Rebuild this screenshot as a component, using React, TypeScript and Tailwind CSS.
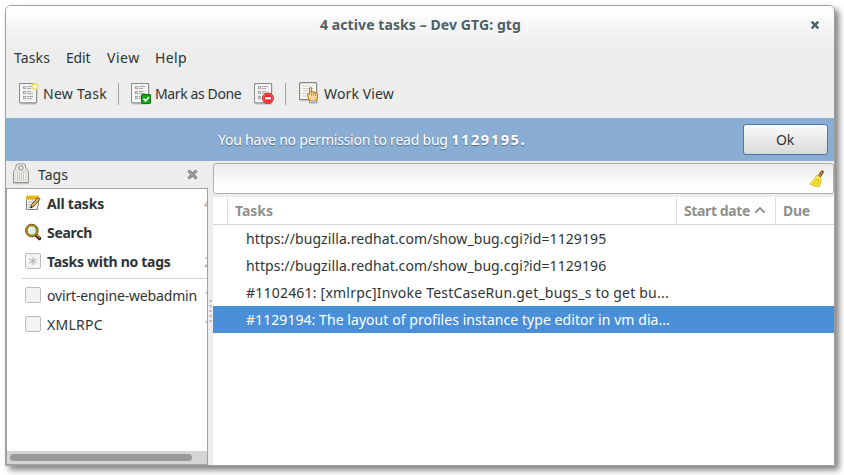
import type { ReactNode } from 'react';

function ListPage({ children }: { children?: ReactNode }) {
  return (
    <svg viewBox="0 0 21 22" className="h-[22px] w-[21px] shrink-0 overflow-visible">
      <path d="M2 21h15.5" stroke="#bcbcbc" strokeWidth="1" />
      <rect x="0.6" y="0.6" width="17" height="19.2" rx="0.8" fill="#f0f0f0" stroke="#8b8b87" strokeWidth="1.2" />
      <rect x="1.9" y="1.9" width="14.4" height="16.6" fill="none" stroke="#ffffff" strokeWidth="1" />
      <g fill="none" stroke="#a9a9a9" strokeWidth="1">
        <rect x="4.5" y="3.5" width="2" height="2" />
        <rect x="4.5" y="8.5" width="2" height="2" />
        <rect x="4.5" y="13.5" width="2" height="2" />
        <path d="M8 3.5h6M8 5.5h4M8 8.5h4M8 10.5h6M8 13.5h6M8 15.5h5" />
      </g>
      {children}
    </svg>
  );
}

function NewTaskIcon() {
  return (
    <ListPage>
      <circle cx="16" cy="3.5" r="2.6" fill="#fffde8" stroke="#f3e06c" strokeWidth="1.6" />
    </ListPage>
  );
}

function DoneIcon() {
  return (
    <ListPage>
      <rect x="10.5" y="11.5" width="9" height="9" rx="0.6" fill="#0ba80d" stroke="#037b05" />
      <path d="M12.5 15.6l2 2.4 3.6-4" fill="none" stroke="#fff" strokeWidth="1.6" />
    </ListPage>
  );
}

function DismissIcon() {
  return (
    <ListPage>
      <circle cx="14" cy="15.3" r="5.4" fill="#ee2b2b" stroke="#cf1f1f" strokeWidth="1" />
      <circle cx="14" cy="15.3" r="4.6" fill="none" stroke="#f47b7b" strokeWidth="0.7" />
      <rect x="11" y="14.2" width="6" height="2.2" fill="#fff" />
    </ListPage>
  );
}

function WorkViewIcon() {
  return (
    <svg viewBox="0 0 20 22" className="relative -top-px h-[22px] w-[20px] shrink-0 overflow-visible">
      <path d="M1 19h9" stroke="#cfcfcf" strokeWidth="1" />
      <rect x="0.6" y="0.6" width="17" height="17" rx="1" fill="#fbfbf9" stroke="#858580" strokeWidth="1.2" />
      <path d="M3 4h12M3 6.5h12M3 9h9M3 11.5h6M3 14h6" stroke="#c9cdc2" strokeWidth="1" />
      <path d="M10.500 19v1.800h7.500V19" fill="#fff" stroke="#5d93d2" strokeWidth="1" />
      <path
        d="M10.5 12V6.8q0-1.3 1-1.3t1.1 1.3V10l1-.4 1 .7 1-.3 1 .8q1.8-.1 1.8 1.4v3.1q0 3-2.2 3.7h-4.4q-1.5-.5-2-2l-1.2-3.6q-.3-1.6.9-1.7z"
        fill="#f6d7a4"
        stroke="#c17d11"
        strokeWidth="1.1"
      />
      <path d="M12.6 10v4M14.6 10.4v3.4M16.5 11v3" stroke="#c17d11" strokeWidth="0.7" />
    </svg>
  );
}

function TagIcon() {
  return (
    <svg viewBox="0 0 18 22" className="h-[22px] w-[18px] shrink-0">
      <path d="M1 20.500h16" stroke="#c4c4c0" strokeWidth="1.500" />
      <path d="M1.500 19.500V8.500Q2 6.500 4 5V3q0-2 2-2h5.500q2 0 2 2v2q2.500 1.500 3 3.500v11z" fill="#dededa" stroke="#92928a" strokeWidth="1" />
      <path d="M2.600 18.500V8.800Q3 7 5 5.500V3.200Q5 2 6.200 2h5.100q1.200 0 1.200 1.200v2.300q2 1.500 2.900 3.300v9.700z" fill="none" stroke="#f2f2f0" strokeWidth="0.800" />
      <circle cx="9" cy="4.800" r="2" fill="#f5f5f5" stroke="#8b8b85" strokeWidth="1" />
      <path d="M4.500 10.500v6M6.500 9.500v7.500M8.500 9.500v7.500M10.500 9.500v7.500M12.500 10.500v6" stroke="#fafafa" strokeWidth="1" />
      <path d="M5.300 10.500v6M7.300 9.500v7.500M9.300 9.500v7.500M11.300 9.500v7.500" stroke="#a6a6a0" strokeWidth="0.600" />
    </svg>
  );
}

function NotepadIcon() {
  return (
    <svg viewBox="0 0 16 16" className="size-4">
      <path d="M1.500 2v12.500h11V12l.9-2V2z" fill="#f1f1ee" stroke="#80817d" strokeWidth="1" />
      <path d="M3 7h6M3 9.500h4M3 12h3" stroke="#b9b9b4" strokeWidth="1" />
      <path d="M1 .5h13v4H1z" fill="#f8cf2a" />
      <path d="M1.500 4.500l1-3 1 3 1-3 1 3 1-3 1 3 1-3 1 3 1-3 1 3 1-3 1 3" fill="none" stroke="#c98a10" strokeWidth="0.600" />
      <path d="M5.500 13l1.200-3.500L12.500 3q1.500-.5 2.500 1.200L9 11z" fill="#e8b461" stroke="#4b3a1d" strokeWidth="0.900" />
      <path d="M5.300 13.200l.8-2 1.200 1z" fill="#222" />
    </svg>
  );
}

function SearchIcon() {
  return (
    <svg viewBox="0 0 16 16" className="size-4 overflow-visible">
      <path d="M11 11l3.500 3.500" stroke="#2e2416" strokeWidth="3.400" strokeLinecap="round" />
      <path d="M11.500 10.800l3 2.800" stroke="#f08a24" strokeWidth="1.300" strokeLinecap="round" />
      <circle cx="6.800" cy="6.500" r="6.300" fill="#d7812a" stroke="#8f4708" strokeWidth="1" />
      <circle cx="6.800" cy="6.500" r="4.600" fill="#e7ece6" stroke="#73a72e" strokeWidth="1.400" />
      <path d="M4 6.500q.3-2.500 2.800-2.800" fill="none" stroke="#fff" strokeWidth="1.200" />
    </svg>
  );
}

function BroomIcon() {
  return (
    <svg viewBox="0 0 16 17" className="mb-px h-[17px] w-4">
      <path d="M10.500 6L13.200 2" stroke="#8a5220" strokeWidth="3.200" strokeLinecap="round" />
      <path d="M10.500 5.500L13.300 1.700" stroke="#e0a767" strokeWidth="1.400" strokeDasharray="1.500 1" />
      <path d="M7.500 5.500q2.500-.8 4.500 2.800.2 4.700-1.500 8.200-5 .5-9.500-2.500l1-1.500q3-1.500 5.500-7z" fill="#f5e33a" stroke="#d3b50c" strokeWidth="0.800" />
      <path d="M8.500 8q-1.500 4-4.500 6M10 9q-.5 4-2.800 6.500" fill="none" stroke="#c6ab08" strokeWidth="0.700" />
      <path d="M7.200 7l4.600 2.500" stroke="#fbf4a0" strokeWidth="1" />
    </svg>
  );
}

function TagBox({ star }: { star?: boolean }) {
  return (
    <span className="flex size-4 items-center justify-center rounded-[2px] border border-[#bdbdbb] bg-[#f3f3f3]">
      {star && (
        <svg viewBox="0 0 10 10" className="size-2.5">
          <path d="M5 1v8M1.500 3l7 4M1.500 7l7-4" stroke="#b4b4b2" strokeWidth="1.100" />
        </svg>
      )}
    </span>
  );
}

function SideRow({ icon, label, text, count }: { icon: ReactNode; label: string; text: string; count: string }) {
  return (
    <div className="flex h-[29px] items-center pl-[18px]">
      <span className="flex w-[22px] shrink-0 pb-px">{icon}</span>
      <span className={'shrink-0 whitespace-nowrap ' + text}>{label}</span>
      <span className="ml-auto w-[3px] shrink-0 overflow-hidden text-[#a9a9a9]">{count}</span>
    </div>
  );
}

function TaskRow({ text, cls }: { text: string; cls: string }) {
  return <div className={'flex h-[27px] items-center pt-px pl-[33px] whitespace-nowrap ' + cls}>{text}</div>;
}

function Divider({ cls }: { cls: string }) {
  return <div className={'h-[22px] w-px bg-[#a3a3a3] ' + cls} />;
}

export default function App() {
  return (
    <div className="h-[475px] w-[844px] overflow-hidden bg-white pt-[5px] pl-[5px] font-['Noto_Sans',sans-serif] text-[14px] leading-5 text-[#2e3436]">
      <div className="flex h-[461px] w-[830px] flex-col overflow-hidden rounded-t-[6px] border border-[#a1a1a1] bg-[#ededed] shadow-[4px_4px_6px_rgba(0,0,0,0.5)]">
        <header className="flex h-[40px] shrink-0 items-center bg-linear-to-b from-white to-[#ededed] pr-[14px] pb-[2px]">
          <h1 className="ml-[314px] font-bold tracking-[0.09px] text-[#4e5e64] [text-shadow:0_1px_#fff]">4 active tasks – Dev GTG: gtg</h1>
          <svg viewBox="0 0 10 10" className="ml-auto size-2.5">
            <path d="M1.700 1.700l6.600 6.600M8.300 1.700L1.700 8.300" stroke="#4e5e64" strokeWidth="2.400" />
          </svg>
        </header>

        <nav className="flex h-[25px] shrink-0 items-center pb-px pl-2">
          <span className="w-[52px] tracking-[0.12px]">Tasks</span>
          <span className="w-[41px] tracking-[-0.2px]">Edit</span>
          <span className="w-[48px] tracking-[0.5px]">View</span>
          <span className="tracking-[0.38px]">Help</span>
        </nav>

        <div className="flex h-[47px] shrink-0 items-center pb-px pl-[13px] whitespace-nowrap">
          <div className="flex w-[99px] items-center gap-[3px]">
            <NewTaskIcon />
            <span className="tracking-[0.3px]">New Task</span>
          </div>
          <Divider cls="" />
          <div className="ml-3 flex w-[123px] items-center gap-[3px]">
            <DoneIcon />
            <span className="tracking-[-0.38px]">Mark as Done</span>
          </div>
          <DismissIcon />
          <Divider cls="ml-[10px]" />
          <div className="ml-[13px] flex items-center gap-[5px]">
            <WorkViewIcon />
            <span className="tracking-[0.14px]">Work View</span>
          </div>
        </div>

        <div className="flex h-[43px] shrink-0 items-center bg-[#8aadd4] pr-[6px] pl-[212px] text-white">
          <p className="whitespace-pre tracking-[-0.22px] [text-shadow:0_1px_1px_rgba(50,80,120,0.7)]">
            You have no permission to read bug <b className="text-[14.500px] tracking-[1.600px]">1129195.</b>
          </p>
          <button className="ml-auto h-[31px] w-[85px] rounded-[3px] border border-[#4d77ac] bg-linear-to-b from-[#fbfbfb] to-[#d9d9d9] pr-px tracking-[-0.2px] text-[#2e3436]">
            Ok
          </button>
        </div>

        <div className="flex min-h-0 flex-1">
          <aside className="flex w-[202px] shrink-0 flex-col">
            <div className="flex h-[27px] shrink-0 items-center pr-[10px] pb-px pl-[6px]">
              <TagIcon />
              <span className="mt-px ml-2">Tags</span>
              <svg viewBox="0 0 11 11" className="ml-auto size-[11px]">
                <path d="M1.500 1.500l8 8M9.500 1.500l-8 8" stroke="#777975" strokeWidth="3" />
                <path d="M1.800 1.800l7.400 7.400M9.200 1.800L1.800 9.200" stroke="#c0c1be" strokeWidth="1" />
              </svg>
            </div>
            <div className="flex min-h-0 flex-1 flex-col border border-[#a1a1a1] bg-white">
              <SideRow icon={<NotepadIcon />} label="All tasks" text="font-bold tracking-[-0.21px]" count="4" />
              <SideRow icon={<SearchIcon />} label="Search" text="font-bold tracking-[-0.29px]" count="" />
              <SideRow icon={<TagBox star />} label="Tasks with no tags" text="font-bold tracking-[-0.28px]" count="2" />
              <div className="mt-[2px] mb-[2px] ml-[15px] h-px shrink-0 bg-[#d3d3d3]" />
              <SideRow icon={<TagBox />} label="ovirt-engine-webadmin" text="tracking-[-0.16px]" count="1" />
              <SideRow icon={<TagBox />} label="XMLRPC" text="tracking-[0.29px]" count="1" />
              <div className="mt-auto flex h-[13px] shrink-0 items-center bg-[#d5d5d5] pl-[3px]">
                <div className="h-[7px] w-[182px] rounded-full bg-[#999b9b]" />
              </div>
            </div>
          </aside>

          <div className="flex w-[5px] shrink-0 flex-col items-center gap-[3px] pt-[139px]">
            {[0, 1, 2, 3, 4].map((i) => (
              <span key={i} className="h-[2px] w-[3px] shrink-0 rounded-full bg-[#bcbcbc]" />
            ))}
          </div>

          <main className="flex min-w-0 flex-1 flex-col">
            <div className="mt-[2px] flex h-[31px] shrink-0 items-center justify-end rounded-[3px] border border-[#b0b0b0] bg-linear-to-b from-[#ebebeb] to-white to-80% pr-2">
              <BroomIcon />
            </div>
            <div className="mt-[3px] flex min-h-0 flex-1 flex-col bg-white">
              <div className="flex h-[28px] shrink-0 border-b border-[#d2d2d2] font-bold text-[#8f908b]">
                <div className="w-[15px] border-r border-[#dcdcdc]" />
                <div className="flex w-[449px] items-center border-r border-[#dcdcdc] pl-[7px]">Tasks</div>
                <div className="flex w-[99px] items-center border-r border-[#dcdcdc] pl-[7px] whitespace-nowrap tracking-[-0.38px]">
                  Start date
                  <svg viewBox="0 0 12 8" className="mb-[2px] ml-1 h-2 w-3">
                    <path d="M1.300 6.600L6 2l4.700 4.600" fill="none" stroke="#8f908b" strokeWidth="1.800" />
                  </svg>
                </div>
                <div className="flex items-center pl-[7px] tracking-[-0.24px]">Due</div>
              </div>
              <TaskRow text="https://bugzilla.redhat.com/show_bug.cgi?id=1129195" cls="tracking-[0.09px]" />
              <TaskRow text="https://bugzilla.redhat.com/show_bug.cgi?id=1129196" cls="tracking-[0.09px]" />
              <TaskRow text="#1102461: [xmlrpc]Invoke TestCaseRun.get_bugs_s to get bu..." cls="tracking-[0.21px]" />
              <TaskRow text="#1129194: The layout of profiles instance type editor in vm dia..." cls="bg-[#4a90d9] tracking-[0.06px] text-white" />
            </div>
          </main>
        </div>
      </div>
    </div>
  );
}
